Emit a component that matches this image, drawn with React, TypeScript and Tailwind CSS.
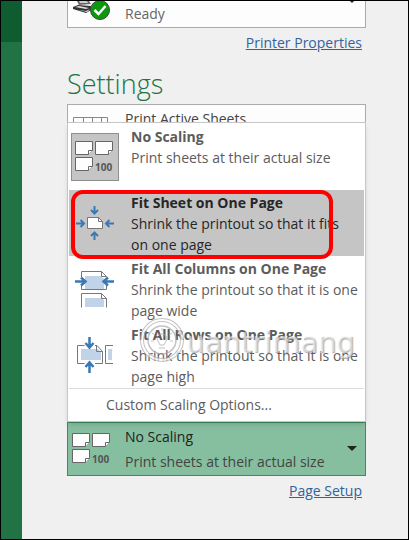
import type { ReactNode } from 'react'

const options = [
  { title: 'No Scaling', text: 'Print sheets at their actual size', icon: 'none' },
  { title: 'Fit Sheet on One Page', text: 'Shrink the printout so that it fits on one page', icon: 'sheet' },
  { title: 'Fit All Columns on One Page', text: 'Shrink the printout so that it is one page wide', icon: 'columns' },
  { title: 'Fit All Rows on One Page', text: 'Shrink the printout so that it is one page high', icon: 'rows' },
]

function Sheets() {
  const page = 'M.5 .5h17v9l-4 4h-13z'
  const fold = 'M17.5 9.5h-4v4'
  return (
    <svg className="shrink-0" width="40" height="32" viewBox="0 0 40 32" aria-hidden="true">
      <g fill="#fdfdfd" stroke="#666">
        <path d={page} />
        <path d={fold} />
        <path d={page} transform="translate(20 0)" />
        <path d={fold} transform="translate(20 0)" />
        <path d={page} transform="translate(0 16)" />
        <path d={fold} transform="translate(0 16)" />
      </g>
      <text x="20" y="30" fontSize="10" fontWeight="700" fill="#555" fontFamily="Open Sans, sans-serif">100</text>
    </svg>
  )
}

function SheetIcon() {
  return (
    <svg width="40" height="36" viewBox="0 0 40 36" aria-hidden="true">
      <path d="M12.500 12.500h11l4 4v7h-15z" fill="#fdfdfd" stroke="#777" />
      <path d="M23.500 12v4.500h4" fill="none" stroke="#777" />
      <g fill="none" stroke="#3b78b5" strokeWidth="2">
        <path d="M1 18.500h8M5.500 15l3.500 3.500L5.500 22" />
        <path d="M39 18.500h-8M34.500 15l-3.500 3.500 3.500 3.500" />
        <path d="M19.500 1v8M16 5l3.500 3.500L23 5" />
        <path d="M19.500 35v-8M16 31l3.500-3.500L23 31" />
      </g>
    </svg>
  )
}

function ColumnsIcon() {
  return (
    <svg width="40" height="37" viewBox="0 0 40 37" aria-hidden="true">
      <path d="M10 5h16l3 3v10H10zM10 27h16l3 2v7H10z" fill="#c0d3e8" />
      <g fill="none" stroke="#777">
        <path d="M6.500 6V.5h20l5 5M6.500 14v4.500h25V14M26.500 .5v5h5" />
        <path d="M6.500 36.500v-14h20l5 5v9M26.500 22.500v5h5" />
      </g>
      <g fill="none" stroke="#3b78b5" strokeWidth="2.500">
        <path d="M0 10.500h10M6 6.500l4.500 4L6 14.500" />
        <path d="M39 10.500H29M33 6.500l-4.500 4 4.500 4" />
      </g>
    </svg>
  )
}

function RowsIcon() {
  return (
    <svg width="40" height="36" viewBox="0 0 40 36" aria-hidden="true">
      <path d="M6 12h17l3 3v8H6zM33 12h4v11h-4z" fill="#c0d3e8" />
      <g fill="none" stroke="#777">
        <path d="M9.500 8.500h-7v18h7M20 8.500h2l5.500 6v12H20M21.500 8.500v6h6" />
        <path d="M38 8.500h-7.500v18H38" />
      </g>
      <g fill="none" stroke="#3b78b5" strokeWidth="2.500">
        <path d="M14.500 0v10M10.500 6l4 4.500 4-4.500" />
        <path d="M14.500 36V26M10.500 30l4-4.500 4 4.500" />
      </g>
    </svg>
  )
}

const icons: Record<string, ReactNode> = {
  none: <Sheets />,
  sheet: <SheetIcon />,
  columns: <ColumnsIcon />,
  rows: <RowsIcon />,
}

function Watermark() {
  return (
    <div className="pointer-events-none absolute top-[194px] left-[72px] flex items-center" aria-hidden="true">
      <svg width="46" height="46" viewBox="0 0 46 46" fill="none" opacity=".7">
        <circle cx="22" cy="23" r="20" stroke="#aaa" strokeWidth="4" />
        <circle cx="22" cy="23" r="20" stroke="#fff" strokeWidth="2" />
        <circle cx="22" cy="23" r="14" stroke="#aaa" strokeWidth="1.500" />
        <path d="M17 22a5 5 0 1 1 10 0l-3 6h-4zM19 31h6M22 11v3M12 16l3 2M32 16l-3 2M11 24h3M30 24h3" stroke="#aaa" />
      </svg>
      <span className="pt-1 font-['DejaVu_Sans',sans-serif] text-[29px] leading-[42px] text-white/50 [text-shadow:1px_1px_1px_#999999cc]">uantrimang</span>
    </div>
  )
}

export default function App() {
  return (
    <div className="flex min-h-screen border border-black bg-[#f0f0f0] font-['Open_Sans',sans-serif] text-sm text-[#5c5c5c]">
      <aside className="w-[21px] shrink-0 bg-[#217346]">
        <div className="h-[41px] bg-[#0e5c2f]" />
      </aside>

      <main className="min-w-0 flex-1 pr-[42px] pl-[45px]">
        {/* Printer */}
        <button className="relative flex h-[27px] w-full overflow-hidden border border-t-0 border-[#ababab] bg-[#fdfdfd] text-left">
          <svg className="ml-[5px] shrink-0" width="38" height="20" viewBox="0 0 38 20" aria-hidden="true">
            <path d="M4 0h12l2 3-12 1z" fill="#666" />
            <path d="M6 0h8l1 2H7z" fill="#ccc" />
            <path d="M0 6l5-2 13 1v4l-5 3L0 8z" fill="#333" />
            <path d="M2 6l4-1 10 2-3 1zM5 9l8 1 4-2-3 3z" fill="#ddd" />
            <circle cx="27" cy="9" r="9.500" fill="#0b9a0b" stroke="#444" />
            <path d="M21.500 9l4 4 7-8" fill="none" stroke="#fff" strokeWidth="2.500" />
          </svg>
          <span className="ml-[14px] leading-[26px] text-[#666]">Ready</span>
          <svg className="absolute top-0 right-2" width="10" height="2" aria-hidden="true"><path d="M3 0h4l-2 2z" fill="#222" /></svg>
        </button>
        <div className="mt-1 pr-1 text-right">
          <a href="#" className="leading-[21px] text-[#33639c] underline">Printer Properties</a>
        </div>

        <h2 className="mt-[13px] text-[27px] leading-[36px] font-light text-[#217346]">Settings</h2>

        <button className="mt-[2px] flex h-[54px] w-full items-start border border-[#ababab] bg-[#fdfdfd] pl-[5px] text-left text-[#444]">
          <svg className="mt-3 shrink-0" width="36" height="32" viewBox="0 0 36 32" aria-hidden="true">
            <path d="M.5 .5h34v31H.5zM10.500 0v32M19.500 0v32M28.500 0v32" fill="none" stroke="#888" />
          </svg>
          <span className="ml-4 leading-[28px]">Print Active Sheets</span>
        </button>

        <div className="relative -mt-9 border border-[#c6c6c6] bg-white p-px shadow-md" role="listbox" aria-label="Scaling">
          {options.map((option, i) => (
            <button
              key={option.title}
              role="option"
              aria-selected={i === 0}
              className={i === 1 ? 'flex h-[66px] w-full items-start bg-[#c5c5c5] pt-[2px] text-left text-[#262626]' : 'flex h-[66px] w-full items-start pt-[2px] text-left'}
            >
              <span className={i === 0 ? 'mt-[7px] ml-[2px] flex size-12 shrink-0 items-center justify-center border border-[#8e8e8e] bg-[#c5c5c5]' : 'mt-[7px] ml-[2px] flex size-12 shrink-0 items-center justify-center'}>
                {icons[option.icon]}
              </span>
              <span className="ml-3 pr-[6px] leading-[21px]">
                <b className="block">{option.title}</b>
                {option.text}
              </span>
            </button>
          ))}
          <button className="block h-8 w-full border-t border-[#dcdcdc] pl-[37px] text-left">Custom Scaling Options...</button>

          <div className="pointer-events-none absolute top-[67px] right-8 left-[3px] h-[69px] rounded-xl border-4 border-[#ff0000]" />
          <Watermark />
        </div>

        <button className="flex h-[54px] w-full items-center border border-[#3f8b61] bg-[#86bf9f] pr-2 pl-1 text-left text-[#444]">
          <Sheets />
          <span className="ml-[13px] flex-1 leading-[25px]">
            <span className="block text-[#222]">No Scaling</span>
            Print sheets at their actual size
          </span>
          <svg width="10" height="6" aria-hidden="true"><path d="M0 0h10l-5 5z" fill="#222" /></svg>
        </button>
        <div className="mt-1 pr-1 text-right">
          <a href="#" className="leading-[21px] text-[#33639c] underline">Page Setup</a>
        </div>
      </main>
    </div>
  )
}
